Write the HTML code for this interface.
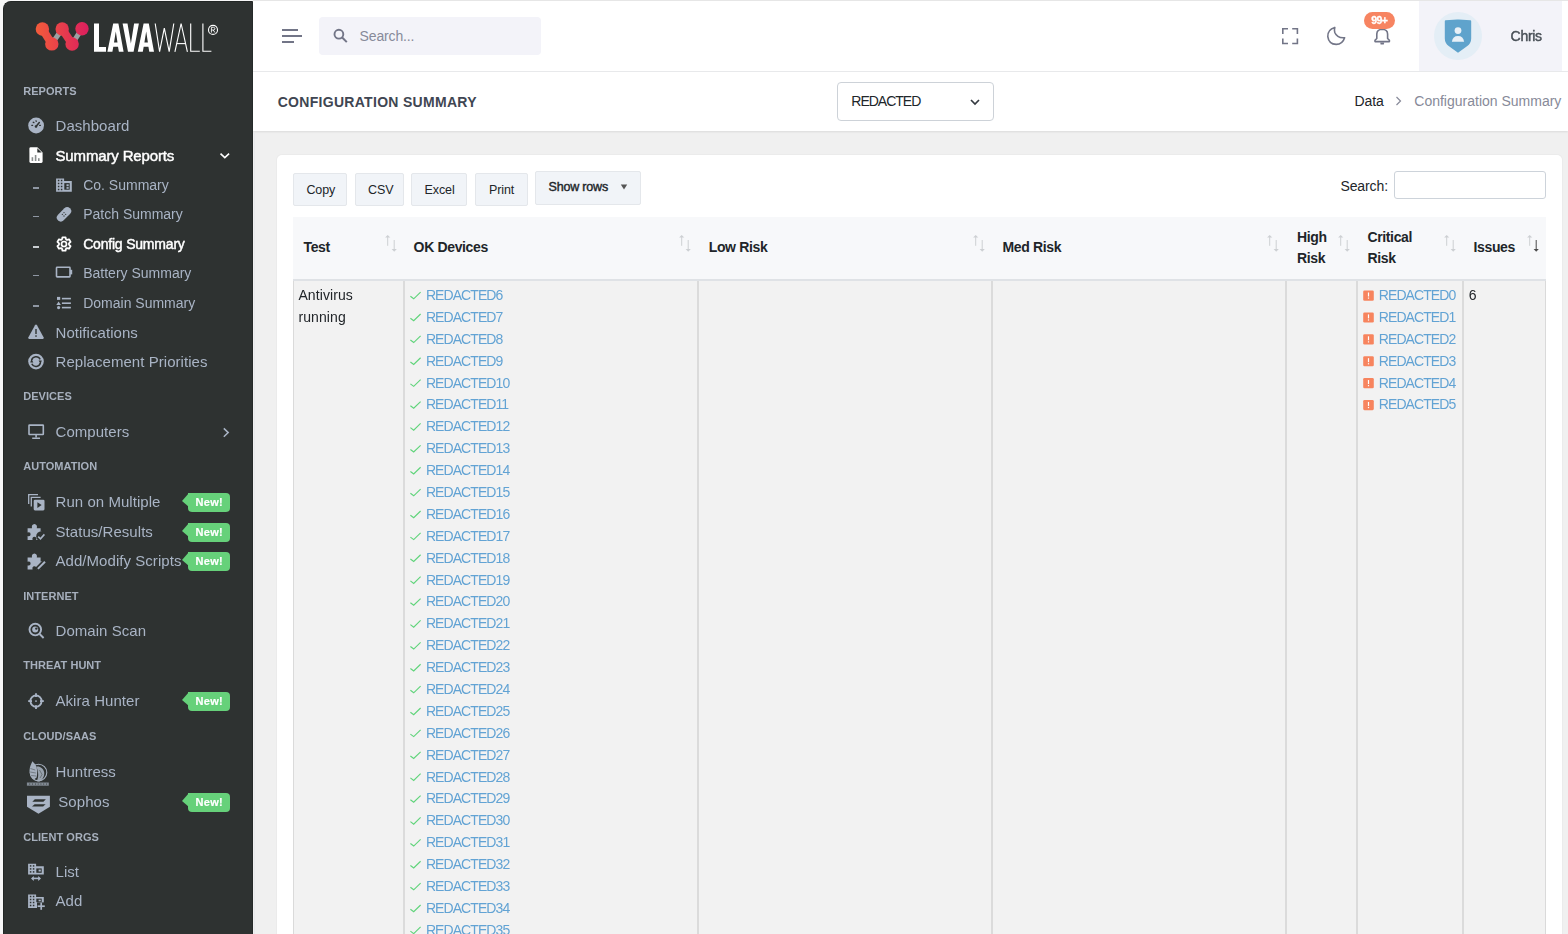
<!DOCTYPE html><html><head><meta charset="utf-8"><style>
*{box-sizing:border-box;margin:0;padding:0}
html,body{width:1568px;height:934px;overflow:hidden;background:#f7f7f7;font-family:"Liberation Sans",sans-serif}
.t{position:absolute;white-space:nowrap}
.abs{position:absolute}
</style></head><body>
<div class="abs" style="left:253px;top:0;width:1315px;height:1px;background:#e6e6e6"></div>
<div class="abs" style="left:253px;top:131px;width:1315px;height:803px;background:#f0f0f0"></div>
<div class="abs" style="left:253px;top:1px;width:1315px;height:70px;background:#fff"></div>
<div class="abs" style="left:253px;top:71px;width:1315px;height:1px;background:#e9eaec"></div>
<div class="abs" style="left:253px;top:72px;width:1315px;height:59px;background:#fff;box-shadow:0 1px 2px rgba(0,0,0,0.09)"></div>
<div class="abs" style="left:0;top:0;width:253px;height:934px;will-change:transform">
<div class="abs" style="left:3px;top:1px;width:250px;height:940px;background:#2e3231;border-top-left-radius:8px;border-left:1px solid #222625;border-top:1px solid #222625;border-right:1px solid #262a29"></div>
<div class="t" style="left:23.20px;top:83.59px;font-size:11px;line-height:15px;color:#a7b0bd;font-weight:700;letter-spacing:0.05px">REPORTS</div>
<div class="t" style="left:23.20px;top:389.49px;font-size:11px;line-height:15px;color:#a7b0bd;font-weight:700;letter-spacing:0.05px">DEVICES</div>
<div class="t" style="left:23.20px;top:459.49px;font-size:11px;line-height:15px;color:#a7b0bd;font-weight:700;letter-spacing:0.05px">AUTOMATION</div>
<div class="t" style="left:23.20px;top:588.69px;font-size:11px;line-height:15px;color:#a7b0bd;font-weight:700;letter-spacing:0.05px">INTERNET</div>
<div class="t" style="left:23.20px;top:658.49px;font-size:11px;line-height:15px;color:#a7b0bd;font-weight:700;letter-spacing:0.05px">THREAT HUNT</div>
<div class="t" style="left:23.20px;top:728.69px;font-size:11px;line-height:15px;color:#a7b0bd;font-weight:700;letter-spacing:0.05px">CLOUD/SAAS</div>
<div class="t" style="left:23.20px;top:829.59px;font-size:11px;line-height:15px;color:#a7b0bd;font-weight:700;letter-spacing:0.05px">CLIENT ORGS</div>
<div class="t" style="left:55.50px;top:115.40px;font-size:15px;line-height:21px;color:#a9b4c5;font-weight:400;letter-spacing:0.05px">Dashboard</div>
<div class="t" style="left:55.50px;top:145.30px;font-size:15px;line-height:21px;color:#ffffff;font-weight:400;letter-spacing:-0.15px;-webkit-text-stroke:0.45px #fff">Summary Reports</div>
<div class="t" style="left:55.50px;top:322.30px;font-size:15px;line-height:21px;color:#a9b4c5;font-weight:400;letter-spacing:0.05px">Notifications</div>
<div class="t" style="left:55.50px;top:351.40px;font-size:15px;line-height:21px;color:#a9b4c5;font-weight:400;letter-spacing:0.05px">Replacement Priorities</div>
<div class="t" style="left:55.50px;top:421.10px;font-size:15px;line-height:21px;color:#a9b4c5;font-weight:400;letter-spacing:0.05px">Computers</div>
<div class="t" style="left:55.50px;top:490.90px;font-size:15px;line-height:21px;color:#a9b4c5;font-weight:400;letter-spacing:0.05px">Run on Multiple</div>
<div class="t" style="left:55.50px;top:520.70px;font-size:15px;line-height:21px;color:#a9b4c5;font-weight:400;letter-spacing:0.05px">Status/Results</div>
<div class="t" style="left:55.50px;top:549.60px;font-size:15px;line-height:21px;color:#a9b4c5;font-weight:400;letter-spacing:0.05px">Add/Modify Scripts</div>
<div class="t" style="left:55.50px;top:620.20px;font-size:15px;line-height:21px;color:#a9b4c5;font-weight:400;letter-spacing:0.05px">Domain Scan</div>
<div class="t" style="left:55.50px;top:690.30px;font-size:15px;line-height:21px;color:#a9b4c5;font-weight:400;letter-spacing:0.05px">Akira Hunter</div>
<div class="t" style="left:55.50px;top:760.90px;font-size:15px;line-height:21px;color:#a9b4c5;font-weight:400;letter-spacing:0.05px">Huntress</div>
<div class="t" style="left:55.50px;top:861.30px;font-size:15px;line-height:21px;color:#a9b4c5;font-weight:400;letter-spacing:0.05px">List</div>
<div class="t" style="left:55.50px;top:890.00px;font-size:15px;line-height:21px;color:#a9b4c5;font-weight:400;letter-spacing:0.05px">Add</div>
<div class="t" style="left:58.30px;top:790.70px;font-size:15px;line-height:21px;color:#a9b4c5;font-weight:400;letter-spacing:0.05px">Sophos</div>
<div class="t" style="left:83.20px;top:175.25px;font-size:14px;line-height:20px;color:#a9b4c5;font-weight:400;letter-spacing:0px">Co. Summary</div>
<div class="abs" style="left:33px;top:187px;width:6px;height:2px;background:#8f97a3"></div>
<div class="t" style="left:83.20px;top:204.15px;font-size:14px;line-height:20px;color:#a9b4c5;font-weight:400;letter-spacing:0px">Patch Summary</div>
<div class="abs" style="left:33px;top:216px;width:6px;height:1px;background:#8f97a3"></div>
<div class="t" style="left:83.20px;top:233.85px;font-size:14px;line-height:20px;color:#ffffff;font-weight:400;letter-spacing:-0.2px;-webkit-text-stroke:0.45px #fff">Config Summary</div>
<div class="abs" style="left:33px;top:246px;width:6px;height:2px;background:#c9cdd1"></div>
<div class="t" style="left:83.20px;top:263.05px;font-size:14px;line-height:20px;color:#a9b4c5;font-weight:400;letter-spacing:0px">Battery Summary</div>
<div class="abs" style="left:33px;top:275px;width:6px;height:1px;background:#8f97a3"></div>
<div class="t" style="left:83.20px;top:292.95px;font-size:14px;line-height:20px;color:#a9b4c5;font-weight:400;letter-spacing:0px">Domain Summary</div>
<div class="abs" style="left:33px;top:305px;width:6px;height:2px;background:#8f97a3"></div>
<div class="abs" style="left:188px;top:492.8px;width:42px;height:19px;background:#66d17a;border-radius:0 4px 4px 4px"></div>
<div class="abs" style="left:181.8px;top:492.8px;width:0;height:0;border-top:8.4px solid transparent;border-bottom:6px solid transparent;border-right:7.2px solid #66d17a"></div>
<div class="t" style="left:195.60px;top:494.89px;font-size:11px;line-height:15px;color:#ffffff;font-weight:700;letter-spacing:0.25px;-webkit-text-stroke:0.2px #fff">New!</div>
<div class="abs" style="left:188px;top:522.8px;width:42px;height:19px;background:#66d17a;border-radius:0 4px 4px 4px"></div>
<div class="abs" style="left:181.8px;top:522.8px;width:0;height:0;border-top:8.4px solid transparent;border-bottom:6px solid transparent;border-right:7.2px solid #66d17a"></div>
<div class="t" style="left:195.60px;top:524.89px;font-size:11px;line-height:15px;color:#ffffff;font-weight:700;letter-spacing:0.25px;-webkit-text-stroke:0.2px #fff">New!</div>
<div class="abs" style="left:188px;top:551.8px;width:42px;height:19px;background:#66d17a;border-radius:0 4px 4px 4px"></div>
<div class="abs" style="left:181.8px;top:551.8px;width:0;height:0;border-top:8.4px solid transparent;border-bottom:6px solid transparent;border-right:7.2px solid #66d17a"></div>
<div class="t" style="left:195.60px;top:553.89px;font-size:11px;line-height:15px;color:#ffffff;font-weight:700;letter-spacing:0.25px;-webkit-text-stroke:0.2px #fff">New!</div>
<div class="abs" style="left:188px;top:692.1px;width:42px;height:19px;background:#66d17a;border-radius:0 4px 4px 4px"></div>
<div class="abs" style="left:181.8px;top:692.1px;width:0;height:0;border-top:8.4px solid transparent;border-bottom:6px solid transparent;border-right:7.2px solid #66d17a"></div>
<div class="t" style="left:195.60px;top:694.19px;font-size:11px;line-height:15px;color:#ffffff;font-weight:700;letter-spacing:0.25px;-webkit-text-stroke:0.2px #fff">New!</div>
<div class="abs" style="left:188px;top:792.8px;width:42px;height:19px;background:#66d17a;border-radius:0 4px 4px 4px"></div>
<div class="abs" style="left:181.8px;top:792.8px;width:0;height:0;border-top:8.4px solid transparent;border-bottom:6px solid transparent;border-right:7.2px solid #66d17a"></div>
<div class="t" style="left:195.60px;top:794.89px;font-size:11px;line-height:15px;color:#ffffff;font-weight:700;letter-spacing:0.25px;-webkit-text-stroke:0.2px #fff">New!</div>
<svg class="abs" style="left:0;top:0" width="253" height="934" viewBox="0 0 253 934"><defs><linearGradient id="lg" gradientUnits="userSpaceOnUse" x1="36" x2="89" y1="0" y2="0"><stop offset="0" stop-color="#f35b3b"/><stop offset="1" stop-color="#db1e5e"/></linearGradient></defs><g><line x1="51.8" y1="43.9" x2="62.2" y2="29" stroke="#9ca1a4" stroke-width="5"/><line x1="72.1" y1="44" x2="82" y2="28.7" stroke="#9ca1a4" stroke-width="5"/><line x1="42.4" y1="29" x2="51.8" y2="43.9" stroke="url(#lg)" stroke-width="8"/><line x1="62.2" y1="29" x2="72.1" y2="44" stroke="url(#lg)" stroke-width="8"/><g fill="url(#lg)"><circle cx="42.4" cy="29" r="6.7"/><circle cx="51.8" cy="43.9" r="6.7"/><circle cx="62.2" cy="29" r="6.7"/><circle cx="72.1" cy="44" r="6.7"/><circle cx="82" cy="28.7" r="6.7"/></g></g><g fill="#ffffff"><path d="M94,23.5 L99,23.5 L99,47.1 L106,47.1 L106,51.8 L94,51.8 Z"/><path fill-rule="evenodd" d="M107.4,51.8 L113.2,23.5 L118.4,23.5 L123.6,51.8 L118.9,51.8 L118,46.8 L113.3,46.8 L112.4,51.8 Z M114,42.6 L117.5,42.6 L115.8,31.5 Z"/><path fill-rule="evenodd" d="M137.8,51.8 L143.6,23.5 L148.8,23.5 L154.0,51.8 L149.3,51.8 L148.4,46.8 L143.7,46.8 L142.8,51.8 Z M144.4,42.6 L147.9,42.6 L146.2,31.5 Z"/><path d="M122.6,23.5 L127.5,23.5 L130.9,43.5 L134.1,23.5 L138.9,23.5 L133.6,51.8 L128,51.8 Z"/></g><g fill="none" stroke="#ffffff" stroke-width="1.12"><polyline points="155.2,23.5 159.6,51.6 164.3,28.2 169.2,51.6 173.8,23.5"/><polyline points="174.9,51.8 181.1,23.5 187.4,51.8"/><line x1="176.8" y1="43.6" x2="185.5" y2="43.6"/><polyline points="190.7,23.5 190.7,51.2 199.8,51.2"/><polyline points="202.9,23.5 202.9,51.2 211.4,51.2"/><circle cx="213" cy="29.9" r="4.5" stroke-width="1.1"/><path d="M211.4,32.6 L211.4,27.3 L213.4,27.3 Q214.9,27.4 214.9,28.7 Q214.9,30 213.4,30 L211.4,30 M213.2,30 L215,32.6" stroke-width="0.9"/></g><circle cx="36.1" cy="125.5" r="7.9" fill="#a9b4c5"/><g stroke="#2e3231" stroke-width="1.3" stroke-linecap="round"><line x1="36" y1="126.5" x2="39.3" y2="122.5" stroke-width="1.5"/><circle cx="36" cy="126.5" r="1.3" fill="#2e3231" stroke="none"/><line x1="31.8" y1="125.3" x2="32.6" y2="125.3"/><line x1="33.2" y1="122.2" x2="33.9" y2="122.6"/><line x1="36" y1="120.8" x2="36.2" y2="121.4"/><line x1="39.6" y1="125.3" x2="40.4" y2="125.3"/></g><path d="M29.4,148.6 Q29.4,147.3 30.7,147.3 L37.3,147.3 L42.6,152.6 L42.6,161.6 Q42.6,162.9 41.3,162.9 L30.7,162.9 Q29.4,162.9 29.4,161.6 Z" fill="#ffffff"/><path d="M37.3,148.2 L41.7,152.6 L37.3,152.6 Z" fill="#2e3231"/><g fill="#8c9090"><rect x="31.6" y="157.2" width="1.6" height="3.8"/><rect x="34.8" y="155" width="1.6" height="6"/><rect x="38" y="158.2" width="1.6" height="2.8"/></g><path d="M56.1,178.4 L64.1,178.4 L64.1,180.9 L71.8,180.9 L71.8,191.8 L56.1,191.8 Z" fill="#a9b4c5"/><g fill="#2e3231"><rect x="57.85" y="179.75" width="1.5" height="1.5"/><rect x="57.85" y="182.75" width="1.5" height="1.5"/><rect x="57.85" y="185.75" width="1.5" height="1.5"/><rect x="57.85" y="188.75" width="1.5" height="1.5"/><rect x="60.85" y="179.75" width="1.5" height="1.5"/><rect x="60.85" y="182.75" width="1.5" height="1.5"/><rect x="60.85" y="185.75" width="1.5" height="1.5"/><rect x="60.85" y="188.75" width="1.5" height="1.5"/></g><rect x="64.3" y="183.1" width="5.4" height="6.6" fill="#2e3231"/><g fill="#a9b4c5"><rect x="66.5" y="184.3" width="2.2" height="1.9"/><rect x="66.5" y="187.1" width="2.2" height="1.7"/></g><g transform="rotate(-45 64 214.3)"><rect x="55.5" y="210.3" width="17" height="8" rx="4" fill="#a9b4c5"/><g fill="#2e3231"><circle cx="62.8" cy="213.1" r="0.6"/><circle cx="65.2" cy="213.1" r="0.6"/><circle cx="62.8" cy="215.5" r="0.6"/><circle cx="65.2" cy="215.5" r="0.6"/></g></g><path d="M61.97,239.43 L62.45,237.28 L65.55,237.28 L66.03,239.43 L66.94,239.95 L69.05,239.29 L70.60,241.98 L68.97,243.48 L68.97,244.52 L70.60,246.02 L69.05,248.71 L66.94,248.05 L66.03,248.57 L65.55,250.72 L62.45,250.72 L61.97,248.57 L61.06,248.05 L58.95,248.71 L57.40,246.02 L59.03,244.52 L59.03,243.48 L57.40,241.98 L58.95,239.29 L61.06,239.95 Z" fill="#3a3d3d" stroke="#ffffff" stroke-width="1.75" stroke-linejoin="round"/><circle cx="64" cy="244" r="2.5" fill="#2e3231" stroke="#ffffff" stroke-width="1.7"/><rect x="56.5" y="267.3" width="13.5" height="9.6" fill="none" stroke="#a9b4c5" stroke-width="1.6" rx="0.6"/><rect x="70" y="269.8" width="2.2" height="4.6" fill="#a9b4c5"/><g fill="#a9b4c5"><rect x="57" y="296.9" width="3.2" height="3"/><path d="M58.6,301.6 L60.9,305 L56.3,305 Z"/><circle cx="58.6" cy="307.6" r="1.6"/><rect x="61.9" y="297.8" width="9" height="1.6"/><rect x="61.9" y="302.4" width="9" height="1.6"/><rect x="61.9" y="306.8" width="9" height="1.6"/></g><path d="M36,324.5 Q36.6,324.5 37,325.2 L43.7,337.5 Q44,338.9 42.8,338.9 L29.2,338.9 Q28,338.9 28.3,337.5 L35,325.2 Q35.4,324.5 36,324.5 Z" fill="#a9b4c5"/><g fill="#2e3231"><rect x="35.3" y="329" width="1.4" height="5"/><rect x="35.3" y="335.3" width="1.4" height="1.5"/></g><circle cx="36" cy="361.6" r="7.8" fill="#a9b4c5"/><g fill="none" stroke="#2e3231" stroke-width="1.5"><path d="M31.6,360.2 A4.6,4.6 0 0 1 40.2,359.4"/><path d="M40.4,363 A4.6,4.6 0 0 1 31.8,363.8"/></g><g fill="#2e3231"><path d="M38.6,360.6 L41.8,360.6 L40.6,364 Z"/><path d="M33.4,362.6 L30.2,362.6 L31.4,359.2 Z"/></g><rect x="29" y="425.1" width="14.3" height="9.4" fill="none" stroke="#a9b4c5" stroke-width="1.6" rx="0.5"/><rect x="35.3" y="434.5" width="1.6" height="3" fill="#a9b4c5"/><rect x="32.2" y="437.5" width="7.8" height="1.5" fill="#a9b4c5"/><g fill="none" stroke="#a9b4c5" stroke-width="1.3"><path d="M28.7,504 L28.7,494.7 L38,494.7"/><path d="M31.3,506.6 L31.3,497.3 L40.6,497.3"/></g><rect x="33.7" y="499.8" width="10.8" height="10.6" rx="1.3" fill="#a9b4c5"/><path d="M37.4,502.3 L41.6,505.1 L37.4,507.9 Z" fill="#2e3231"/><path fill="#a9b4c5" d="M27.6,528.2 L32.0,528.2 Q31.200000000000003,524.4 34.4,524 Q37.6,524.4 36.8,528.2 L40.6,528.2 L40.6,532 Q43.6,531.3 43.6,534.2 Q43.6,537.1 40.6,536.4 L40.6,540 L36.2,540 Q37.0,537 34.4,536.8 Q31.8,537 32.6,540 L27.6,540 L27.6,536 Q30.6,536.8 30.6,534.2 Q30.6,531.5 27.6,532.4 Z"/><circle cx="41.2" cy="536.4" r="5" fill="#2e3231"/><path d="M38.2,536.6 L40.5,538.8 L44.4,534.4" fill="none" stroke="#a9b4c5" stroke-width="1.6"/><path fill="#a9b4c5" d="M27.6,557.6 L32.0,557.6 Q31.200000000000003,553.8 34.4,553.4 Q37.6,553.8 36.8,557.6 L40.6,557.6 L40.6,561.4 Q43.6,560.6999999999999 43.6,563.6 Q43.6,566.5 40.6,565.8 L40.6,569.4 L36.2,569.4 Q37.0,566.4 34.4,566.1999999999999 Q31.8,566.4 32.6,569.4 L27.6,569.4 L27.6,565.4 Q30.6,566.1999999999999 30.6,563.6 Q30.6,560.9 27.6,561.8 Z"/><path d="M36.6,570 L46,560.6" stroke="#2e3231" stroke-width="5"/><path d="M37.9,568.9 L45,561.8" stroke="#a9b4c5" stroke-width="2"/><circle cx="35.3" cy="629.6" r="5.8" fill="none" stroke="#a9b4c5" stroke-width="1.9"/><line x1="39.6" y1="634" x2="43.6" y2="638" stroke="#a9b4c5" stroke-width="1.8"/><circle cx="35.2" cy="629.6" r="3" fill="#a9b4c5"/><circle cx="36.3" cy="628.6" r="1.2" fill="#2e3231"/><circle cx="36" cy="701.1" r="5.6" fill="none" stroke="#a9b4c5" stroke-width="1.85"/><g stroke="#a9b4c5" stroke-width="1.85"><line x1="36" y1="693.2" x2="36" y2="697"/><line x1="36" y1="705.2" x2="36" y2="709"/><line x1="28.2" y1="701.1" x2="32" y2="701.1"/><line x1="40" y1="701.1" x2="43.8" y2="701.1"/></g><circle cx="36" cy="701.1" r="0.9" fill="#a9b4c5"/><circle cx="38.5" cy="772.6" r="8.3" fill="none" stroke="#a5afbd" stroke-width="1.1"/><path d="M32.4,761.2 C31,764 29.6,767 29.5,770.5 C29.5,774.5 31.2,777.6 34,779.6 L36.6,777.6 C37.6,773 37.6,768.5 35.4,764.6 Z" fill="#a5afbd"/><path d="M36.2,766.6 C40.2,766 43.6,768.6 44.2,772.4 C44.6,776.4 42.2,780.2 39.4,781.6 L36.8,781.2 C38.8,777.2 38.8,772.2 36.2,766.6 Z" fill="#a5afbd" opacity="0.9"/><g stroke="#2e3231" stroke-width="0.6" opacity="0.7" fill="none"><path d="M30.4,768.5 L35.2,770"/><path d="M30.2,772 L35.8,773"/><path d="M31.2,775.5 L36,776"/><path d="M39.5,770 L42,774.5 L40,778"/></g><rect x="26.9" y="782.5" width="21.9" height="3.2" fill="#a5afbd" opacity="0.7"/><g fill="#2e3231" opacity="0.65"><rect x="29.4" y="783.2" width="0.7" height="1.8"/><rect x="32.2" y="783.2" width="0.7" height="1.8"/><rect x="35" y="783.2" width="0.7" height="1.8"/><rect x="37.8" y="783.2" width="0.7" height="1.8"/><rect x="40.6" y="783.2" width="0.7" height="1.8"/><rect x="43.4" y="783.2" width="0.7" height="1.8"/><rect x="46.2" y="783.2" width="0.7" height="1.8"/></g><path d="M27,795.7 L49.9,795.7 L49.9,806.8 L38.5,813.7 L27,806.8 Z" fill="#a9b4c5"/><g fill="#2e3231"><path d="M34.8,799.3 L45.9,799.3 L43.4,801.7 L32.3,801.7 Z"/><path d="M34.6,804.2 L45.6,804.2 L43.1,806.6 L32,806.6 Z"/></g><path d="M28.1,863.8 L36.1,863.8 L36.1,866.3 L43.8,866.3 L43.8,874.5 L28.1,874.5 Z" fill="#a9b4c5"/><g fill="#2e3231"><rect x="29.85" y="865.15" width="1.5" height="1.5"/><rect x="29.85" y="868.15" width="1.5" height="1.5"/><rect x="29.85" y="871.15" width="1.5" height="1.5"/><rect x="32.85" y="865.15" width="1.5" height="1.5"/><rect x="32.85" y="868.15" width="1.5" height="1.5"/><rect x="32.85" y="871.15" width="1.5" height="1.5"/></g><rect x="36.3" y="868.4" width="5.4" height="4.4" fill="#2e3231"/><rect x="38.6" y="869.6" width="2.2" height="1.9" fill="#a9b4c5"/><g stroke="#a9b4c5" stroke-width="1.6" fill="none"><line x1="32.4" y1="878.4" x2="39.6" y2="878.4"/></g><g fill="#a9b4c5"><path d="M31,878.4 L33.8,875.9 L33.8,880.9 Z"/><path d="M41,878.4 L38.2,875.9 L38.2,880.9 Z"/></g><path d="M28.1,894.4 L36.1,894.4 L36.1,896.9 L43.8,896.9 L43.8,908 L28.1,908 Z" fill="#a9b4c5"/><g fill="#2e3231"><rect x="29.85" y="895.75" width="1.5" height="1.5"/><rect x="29.85" y="898.75" width="1.5" height="1.5"/><rect x="29.85" y="901.75" width="1.5" height="1.5"/><rect x="29.85" y="904.75" width="1.5" height="1.5"/><rect x="32.85" y="895.75" width="1.5" height="1.5"/><rect x="32.85" y="898.75" width="1.5" height="1.5"/><rect x="32.85" y="901.75" width="1.5" height="1.5"/><rect x="32.85" y="904.75" width="1.5" height="1.5"/></g><rect x="36.3" y="898.6" width="5.4" height="3.6" fill="#2e3231"/><rect x="38.6" y="899.7" width="2.2" height="1.6" fill="#a9b4c5"/><path d="M37,902.4 L45.8,902.4 L45.8,911.2 L37,911.2 Z" fill="#2e3231"/><g stroke="#a9b4c5" stroke-width="1.7"><line x1="41.2" y1="902.6" x2="41.2" y2="909.8"/><line x1="37.6" y1="906.2" x2="44.8" y2="906.2"/></g><polyline points="220.5,153.6 224.8,157.6 229.1,153.6" fill="none" stroke="#ffffff" stroke-width="1.6"/><polyline points="223.8,428.4 228.2,432.6 223.8,436.8" fill="none" stroke="#a9b4c5" stroke-width="1.5"/></svg>
</div>
<div class="abs" style="left:282px;top:29px;width:16px;height:2px;background:#727587"></div>
<div class="abs" style="left:282px;top:35px;width:20px;height:2px;background:#727587"></div>
<div class="abs" style="left:282px;top:41px;width:12px;height:2px;background:#727587"></div>
<div class="abs" style="left:319px;top:17px;width:222px;height:38px;background:#f3f3f9;border-radius:4px"></div>
<div class="t" style="left:359.60px;top:26.05px;font-size:14px;line-height:20px;color:#878a99;font-weight:400;letter-spacing:-0.15px">Search...</div>
<svg class="abs" style="left:0;top:0" width="1568" height="72" viewBox="0 0 1568 72"><circle cx="338.9" cy="34.2" r="4.4" fill="none" stroke="#727587" stroke-width="1.9"/><line x1="342.2" y1="37.5" x2="346.8" y2="42.1" stroke="#727587" stroke-width="2"/><g fill="none" stroke="#727587" stroke-width="1.6"><polyline points="1282.8,34 1282.8,28.8 1288,28.8"/><polyline points="1292.2,28.8 1297.4,28.8 1297.4,34"/><polyline points="1297.4,38.4 1297.4,43.5 1292.2,43.5"/><polyline points="1288,43.5 1282.8,43.5 1282.8,38.4"/></g><path d="M1334.8,27.4 Q1327.4,29.6 1327.8,36.6 Q1328.8,44.2 1336.2,44.4 Q1342.6,44.2 1344.6,37.7 Q1337.2,38.4 1334.8,32.5 Q1334,30 1334.8,27.4 Z" fill="none" stroke="#727587" stroke-width="1.6" stroke-linejoin="round"/><path d="M1375,41.6 L1375,40.3 L1376.8,38.5 L1376.8,34 Q1377,29.4 1382.2,29.3 Q1387.4,29.4 1387.6,34 L1387.6,38.5 L1389.4,40.3 L1389.4,41.6 Z" fill="none" stroke="#727587" stroke-width="1.6" stroke-linejoin="round"/><path d="M1380.2,42.4 L1384.2,42.4 L1383.8,44.6 L1380.6,44.6 Z" fill="#727587"/></svg>
<div class="abs" style="left:1364.3px;top:11.7px;width:31px;height:17px;background:#f78461;border-radius:9px"></div>
<div class="t" style="left:1371.20px;top:12.86px;font-size:10.5px;line-height:15px;color:#ffffff;font-weight:700;letter-spacing:-0.5px;-webkit-text-stroke:0.3px #fff">99+</div>
<div class="abs" style="left:1419px;top:1px;width:143px;height:70px;background:#f3f3f9"></div>
<div class="abs" style="left:1434px;top:12px;width:48px;height:48px;background:#e4eef6;border-radius:50%"></div>
<svg class="abs" style="left:1440px;top:15px" width="36" height="40" viewBox="0 0 36 40"><path d="M4.8,6.2 Q4.8,5.4 5.6,5.2 L17.2,4.5 Q18,4.4 18.8,4.5 L30.4,5.2 Q31.2,5.4 31.2,6.2 L31.2,23.5 Q31.2,28.2 27,31.3 L18,37.7 L9,31.3 Q4.8,28.2 4.8,23.5 Z" fill="#5fa3cc"/><circle cx="18" cy="15.6" r="3.4" fill="#e8f0f7"/><path d="M11.9,26.8 Q12.6,21 18,21 Q23.4,21 24.1,26.8 Z" fill="#e8f0f7"/></svg>
<div class="t" style="left:1510.60px;top:26.15px;font-size:14px;line-height:20px;color:#495057;font-weight:400;letter-spacing:-0.3px;-webkit-text-stroke:0.45px #495057">Chris</div>
<div class="t" style="left:277.70px;top:91.85px;font-size:14px;line-height:20px;color:#3f4652;font-weight:700;letter-spacing:0.3px">CONFIGURATION SUMMARY</div>
<div class="abs" style="left:837px;top:82px;width:157px;height:39px;background:#fff;border:1px solid #cdd2d8;border-radius:4px"></div>
<div class="t" style="left:851.30px;top:91.05px;font-size:14px;line-height:20px;color:#212529;font-weight:400;letter-spacing:-1px">REDACTED</div>
<svg class="abs" style="left:968px;top:97px" width="14" height="10" viewBox="0 0 14 10"><polyline points="3,3 7,7 11,3" fill="none" stroke="#343a40" stroke-width="1.7"/></svg>
<div class="t" style="left:1354.50px;top:90.65px;font-size:14px;line-height:20px;color:#212529;font-weight:400;letter-spacing:-0.1px">Data</div>
<svg class="abs" style="left:1392px;top:94px" width="12" height="14" viewBox="0 0 12 14"><polyline points="4.5,3 8.5,7 4.5,11" fill="none" stroke="#878a99" stroke-width="1.2"/></svg>
<div class="t" style="left:1414.30px;top:90.65px;font-size:14px;line-height:20px;color:#878a99;font-weight:400;letter-spacing:0px">Configuration Summary</div>
<div class="abs" style="left:254px;top:132px;width:1px;height:802px;background:#e8e9ec"></div>
<div class="abs" style="left:277px;top:155px;width:1285px;height:800px;background:#fff;border-radius:5px;box-shadow:0 0 0 1px #ebebeb"></div>
<div class="abs" style="left:293px;top:173px;width:54px;height:33px;background:#f1f4f8;border:1px solid #e4e7eb;border-radius:2px"></div>
<div class="t" style="left:306.40px;top:180.67px;font-size:12.5px;line-height:18px;color:#212529;font-weight:400;letter-spacing:-0.1px">Copy</div>
<div class="abs" style="left:355px;top:173px;width:49px;height:33px;background:#f1f4f8;border:1px solid #e4e7eb;border-radius:2px"></div>
<div class="t" style="left:368.00px;top:180.67px;font-size:12.5px;line-height:18px;color:#212529;font-weight:400;letter-spacing:-0.1px">CSV</div>
<div class="abs" style="left:411px;top:173px;width:56px;height:33px;background:#f1f4f8;border:1px solid #e4e7eb;border-radius:2px"></div>
<div class="t" style="left:424.50px;top:180.67px;font-size:12.5px;line-height:18px;color:#212529;font-weight:400;letter-spacing:-0.1px">Excel</div>
<div class="abs" style="left:475px;top:173px;width:53px;height:33px;background:#f1f4f8;border:1px solid #e4e7eb;border-radius:2px"></div>
<div class="t" style="left:489.00px;top:180.67px;font-size:12.5px;line-height:18px;color:#212529;font-weight:400;letter-spacing:-0.1px">Print</div>
<div class="abs" style="left:535px;top:171px;width:106px;height:34px;background:#f1f4f8;border:1px solid #e4e7eb;border-radius:2px"></div>
<div class="t" style="left:548.60px;top:178.47px;font-size:12.5px;line-height:18px;color:#212529;font-weight:400;letter-spacing:-0.2px;-webkit-text-stroke:0.4px #212529">Show rows</div>
<svg class="abs" style="left:619px;top:182px" width="10" height="10" viewBox="0 0 10 10"><path d="M1.8,2.5 L8.2,2.5 L5,7.6 Z" fill="#555"/></svg>
<div class="t" style="left:1340.40px;top:175.65px;font-size:14px;line-height:20px;color:#212529;font-weight:400;letter-spacing:-0.1px">Search:</div>
<div class="abs" style="left:1394px;top:171px;width:152px;height:28px;background:#fff;border:1px solid #cdd3da;border-radius:3px"></div>
<div class="abs" style="left:293px;top:217px;width:1253px;height:62px;background:#f7f8fa"></div>
<div class="abs" style="left:293px;top:279px;width:1253px;height:2px;background:#dfe2e6"></div>
<div class="abs" style="left:293px;top:281px;width:1253px;height:660px;background:#f2f2f2"></div>
<div class="abs" style="left:293px;top:281px;width:1px;height:660px;background:#dadada"></div>
<div class="abs" style="left:403px;top:281px;width:2px;height:660px;background:#dbdbdb"></div>
<div class="abs" style="left:697px;top:281px;width:2px;height:660px;background:#dbdbdb"></div>
<div class="abs" style="left:991px;top:281px;width:2px;height:660px;background:#dbdbdb"></div>
<div class="abs" style="left:1285px;top:281px;width:2px;height:660px;background:#dbdbdb"></div>
<div class="abs" style="left:1356px;top:281px;width:2px;height:660px;background:#dbdbdb"></div>
<div class="abs" style="left:1462px;top:281px;width:2px;height:660px;background:#dbdbdb"></div>
<div class="abs" style="left:1545px;top:281px;width:1px;height:660px;background:#dadada"></div>
<div class="t" style="left:303.50px;top:236.65px;font-size:14px;line-height:20px;color:#212529;font-weight:700;letter-spacing:-0.35px">Test</div>
<div class="t" style="left:413.60px;top:236.65px;font-size:14px;line-height:20px;color:#212529;font-weight:700;letter-spacing:-0.35px">OK Devices</div>
<div class="t" style="left:708.70px;top:236.65px;font-size:14px;line-height:20px;color:#212529;font-weight:700;letter-spacing:-0.35px">Low Risk</div>
<div class="t" style="left:1002.50px;top:236.65px;font-size:14px;line-height:20px;color:#212529;font-weight:700;letter-spacing:-0.35px">Med Risk</div>
<div class="t" style="left:1473.50px;top:236.65px;font-size:14px;line-height:20px;color:#212529;font-weight:700;letter-spacing:-0.35px">Issues</div>
<div class="t" style="left:1297.00px;top:226.95px;font-size:14px;line-height:20px;color:#212529;font-weight:700;letter-spacing:-0.35px">High</div>
<div class="t" style="left:1297.00px;top:247.75px;font-size:14px;line-height:20px;color:#212529;font-weight:700;letter-spacing:-0.35px">Risk</div>
<div class="t" style="left:1367.40px;top:226.95px;font-size:14px;line-height:20px;color:#212529;font-weight:700;letter-spacing:-0.35px">Critical</div>
<div class="t" style="left:1367.40px;top:247.75px;font-size:14px;line-height:20px;color:#212529;font-weight:700;letter-spacing:-0.35px">Risk</div>
<svg class="abs" style="left:0;top:0" width="1568" height="934" viewBox="0 0 1568 934"><line x1="387.7" y1="237" x2="387.7" y2="245.8" stroke="#cdd0d3" stroke-width="1"/><path d="M385.09999999999997,237.6 L387.7,234.9 L390.3,237.6 Z" fill="#cdd0d3"/><line x1="394.2" y1="240" x2="394.2" y2="249.6" stroke="#cdd0d3" stroke-width="1"/><path d="M391.59999999999997,249 L394.2,251.8 L396.8,249 Z" fill="#cdd0d3"/><line x1="681.7" y1="237" x2="681.7" y2="245.8" stroke="#cdd0d3" stroke-width="1"/><path d="M679.1,237.6 L681.7,234.9 L684.3000000000001,237.6 Z" fill="#cdd0d3"/><line x1="688.2" y1="240" x2="688.2" y2="249.6" stroke="#cdd0d3" stroke-width="1"/><path d="M685.6,249 L688.2,251.8 L690.8000000000001,249 Z" fill="#cdd0d3"/><line x1="975.7" y1="237" x2="975.7" y2="245.8" stroke="#cdd0d3" stroke-width="1"/><path d="M973.1,237.6 L975.7,234.9 L978.3000000000001,237.6 Z" fill="#cdd0d3"/><line x1="982.2" y1="240" x2="982.2" y2="249.6" stroke="#cdd0d3" stroke-width="1"/><path d="M979.6,249 L982.2,251.8 L984.8000000000001,249 Z" fill="#cdd0d3"/><line x1="1269.7" y1="237" x2="1269.7" y2="245.8" stroke="#cdd0d3" stroke-width="1"/><path d="M1267.1000000000001,237.6 L1269.7,234.9 L1272.3,237.6 Z" fill="#cdd0d3"/><line x1="1276.2" y1="240" x2="1276.2" y2="249.6" stroke="#cdd0d3" stroke-width="1"/><path d="M1273.6000000000001,249 L1276.2,251.8 L1278.8,249 Z" fill="#cdd0d3"/><line x1="1340.7" y1="237" x2="1340.7" y2="245.8" stroke="#cdd0d3" stroke-width="1"/><path d="M1338.1000000000001,237.6 L1340.7,234.9 L1343.3,237.6 Z" fill="#cdd0d3"/><line x1="1347.2" y1="240" x2="1347.2" y2="249.6" stroke="#cdd0d3" stroke-width="1"/><path d="M1344.6000000000001,249 L1347.2,251.8 L1349.8,249 Z" fill="#cdd0d3"/><line x1="1446.7" y1="237" x2="1446.7" y2="245.8" stroke="#cdd0d3" stroke-width="1"/><path d="M1444.1000000000001,237.6 L1446.7,234.9 L1449.3,237.6 Z" fill="#cdd0d3"/><line x1="1453.2" y1="240" x2="1453.2" y2="249.6" stroke="#cdd0d3" stroke-width="1"/><path d="M1450.6000000000001,249 L1453.2,251.8 L1455.8,249 Z" fill="#cdd0d3"/><line x1="1529.7" y1="237" x2="1529.7" y2="245.8" stroke="#cdd0d3" stroke-width="1"/><path d="M1527.1000000000001,237.6 L1529.7,234.9 L1532.3,237.6 Z" fill="#cdd0d3"/><line x1="1536.2" y1="240" x2="1536.2" y2="249.6" stroke="#4a4a4a" stroke-width="1"/><path d="M1533.6000000000001,249 L1536.2,251.8 L1538.8,249 Z" fill="#4a4a4a"/><polyline points="410.4,296.3 413.7,298.8 420.6,292.1" fill="none" stroke="#5fd47a" stroke-width="1.15"/><polyline points="410.4,318.19 413.7,320.69 420.6,313.99" fill="none" stroke="#5fd47a" stroke-width="1.15"/><polyline points="410.4,340.08000000000004 413.7,342.58000000000004 420.6,335.88000000000005" fill="none" stroke="#5fd47a" stroke-width="1.15"/><polyline points="410.4,361.97 413.7,364.47 420.6,357.77000000000004" fill="none" stroke="#5fd47a" stroke-width="1.15"/><polyline points="410.4,383.86 413.7,386.36 420.6,379.66" fill="none" stroke="#5fd47a" stroke-width="1.15"/><polyline points="410.4,405.75 413.7,408.25 420.6,401.55" fill="none" stroke="#5fd47a" stroke-width="1.15"/><polyline points="410.4,427.64 413.7,430.14 420.6,423.44" fill="none" stroke="#5fd47a" stroke-width="1.15"/><polyline points="410.4,449.53000000000003 413.7,452.03000000000003 420.6,445.33000000000004" fill="none" stroke="#5fd47a" stroke-width="1.15"/><polyline points="410.4,471.42 413.7,473.92 420.6,467.22" fill="none" stroke="#5fd47a" stroke-width="1.15"/><polyline points="410.4,493.31 413.7,495.81 420.6,489.11" fill="none" stroke="#5fd47a" stroke-width="1.15"/><polyline points="410.4,515.2 413.7,517.7 420.6,511.00000000000006" fill="none" stroke="#5fd47a" stroke-width="1.15"/><polyline points="410.4,537.09 413.7,539.59 420.6,532.89" fill="none" stroke="#5fd47a" stroke-width="1.15"/><polyline points="410.4,558.98 413.7,561.48 420.6,554.78" fill="none" stroke="#5fd47a" stroke-width="1.15"/><polyline points="410.4,580.87 413.7,583.37 420.6,576.67" fill="none" stroke="#5fd47a" stroke-width="1.15"/><polyline points="410.4,602.76 413.7,605.26 420.6,598.56" fill="none" stroke="#5fd47a" stroke-width="1.15"/><polyline points="410.4,624.6500000000001 413.7,627.1500000000001 420.6,620.45" fill="none" stroke="#5fd47a" stroke-width="1.15"/><polyline points="410.4,646.54 413.7,649.04 420.6,642.3399999999999" fill="none" stroke="#5fd47a" stroke-width="1.15"/><polyline points="410.4,668.4300000000001 413.7,670.9300000000001 420.6,664.23" fill="none" stroke="#5fd47a" stroke-width="1.15"/><polyline points="410.4,690.3199999999999 413.7,692.8199999999999 420.6,686.1199999999999" fill="none" stroke="#5fd47a" stroke-width="1.15"/><polyline points="410.4,712.21 413.7,714.71 420.6,708.01" fill="none" stroke="#5fd47a" stroke-width="1.15"/><polyline points="410.4,734.1 413.7,736.6 420.6,729.9" fill="none" stroke="#5fd47a" stroke-width="1.15"/><polyline points="410.4,755.99 413.7,758.49 420.6,751.79" fill="none" stroke="#5fd47a" stroke-width="1.15"/><polyline points="410.4,777.8800000000001 413.7,780.3800000000001 420.6,773.6800000000001" fill="none" stroke="#5fd47a" stroke-width="1.15"/><polyline points="410.4,799.77 413.7,802.27 420.6,795.5699999999999" fill="none" stroke="#5fd47a" stroke-width="1.15"/><polyline points="410.4,821.6600000000001 413.7,824.1600000000001 420.6,817.46" fill="none" stroke="#5fd47a" stroke-width="1.15"/><polyline points="410.4,843.55 413.7,846.05 420.6,839.3499999999999" fill="none" stroke="#5fd47a" stroke-width="1.15"/><polyline points="410.4,865.44 413.7,867.94 420.6,861.24" fill="none" stroke="#5fd47a" stroke-width="1.15"/><polyline points="410.4,887.3299999999999 413.7,889.8299999999999 420.6,883.1299999999999" fill="none" stroke="#5fd47a" stroke-width="1.15"/><polyline points="410.4,909.22 413.7,911.72 420.6,905.02" fill="none" stroke="#5fd47a" stroke-width="1.15"/><polyline points="410.4,931.1100000000001 413.7,933.6100000000001 420.6,926.9100000000001" fill="none" stroke="#5fd47a" stroke-width="1.15"/><rect x="1363.2" y="290.50" width="10.6" height="10.2" rx="1.3" fill="#f7845e"/><rect x="1367.9" y="292.50" width="1.2" height="4" fill="#fff"/><rect x="1367.9" y="297.50" width="1.2" height="1.2" fill="#fff"/><rect x="1363.2" y="312.39" width="10.6" height="10.2" rx="1.3" fill="#f7845e"/><rect x="1367.9" y="314.39" width="1.2" height="4" fill="#fff"/><rect x="1367.9" y="319.39" width="1.2" height="1.2" fill="#fff"/><rect x="1363.2" y="334.28" width="10.6" height="10.2" rx="1.3" fill="#f7845e"/><rect x="1367.9" y="336.28" width="1.2" height="4" fill="#fff"/><rect x="1367.9" y="341.28" width="1.2" height="1.2" fill="#fff"/><rect x="1363.2" y="356.17" width="10.6" height="10.2" rx="1.3" fill="#f7845e"/><rect x="1367.9" y="358.17" width="1.2" height="4" fill="#fff"/><rect x="1367.9" y="363.17" width="1.2" height="1.2" fill="#fff"/><rect x="1363.2" y="378.06" width="10.6" height="10.2" rx="1.3" fill="#f7845e"/><rect x="1367.9" y="380.06" width="1.2" height="4" fill="#fff"/><rect x="1367.9" y="385.06" width="1.2" height="1.2" fill="#fff"/><rect x="1363.2" y="399.95" width="10.6" height="10.2" rx="1.3" fill="#f7845e"/><rect x="1367.9" y="401.95" width="1.2" height="4" fill="#fff"/><rect x="1367.9" y="406.95" width="1.2" height="1.2" fill="#fff"/></svg>
<div class="t" style="left:425.90px;top:284.95px;font-size:14px;line-height:20px;color:#62a3d4;font-weight:400;letter-spacing:-0.92px">REDACTED6</div>
<div class="t" style="left:425.90px;top:306.84px;font-size:14px;line-height:20px;color:#62a3d4;font-weight:400;letter-spacing:-0.92px">REDACTED7</div>
<div class="t" style="left:425.90px;top:328.73px;font-size:14px;line-height:20px;color:#62a3d4;font-weight:400;letter-spacing:-0.92px">REDACTED8</div>
<div class="t" style="left:425.90px;top:350.62px;font-size:14px;line-height:20px;color:#62a3d4;font-weight:400;letter-spacing:-0.92px">REDACTED9</div>
<div class="t" style="left:425.90px;top:372.51px;font-size:14px;line-height:20px;color:#62a3d4;font-weight:400;letter-spacing:-0.92px">REDACTED10</div>
<div class="t" style="left:425.90px;top:394.40px;font-size:14px;line-height:20px;color:#62a3d4;font-weight:400;letter-spacing:-0.92px">REDACTED11</div>
<div class="t" style="left:425.90px;top:416.29px;font-size:14px;line-height:20px;color:#62a3d4;font-weight:400;letter-spacing:-0.92px">REDACTED12</div>
<div class="t" style="left:425.90px;top:438.18px;font-size:14px;line-height:20px;color:#62a3d4;font-weight:400;letter-spacing:-0.92px">REDACTED13</div>
<div class="t" style="left:425.90px;top:460.07px;font-size:14px;line-height:20px;color:#62a3d4;font-weight:400;letter-spacing:-0.92px">REDACTED14</div>
<div class="t" style="left:425.90px;top:481.96px;font-size:14px;line-height:20px;color:#62a3d4;font-weight:400;letter-spacing:-0.92px">REDACTED15</div>
<div class="t" style="left:425.90px;top:503.85px;font-size:14px;line-height:20px;color:#62a3d4;font-weight:400;letter-spacing:-0.92px">REDACTED16</div>
<div class="t" style="left:425.90px;top:525.74px;font-size:14px;line-height:20px;color:#62a3d4;font-weight:400;letter-spacing:-0.92px">REDACTED17</div>
<div class="t" style="left:425.90px;top:547.63px;font-size:14px;line-height:20px;color:#62a3d4;font-weight:400;letter-spacing:-0.92px">REDACTED18</div>
<div class="t" style="left:425.90px;top:569.52px;font-size:14px;line-height:20px;color:#62a3d4;font-weight:400;letter-spacing:-0.92px">REDACTED19</div>
<div class="t" style="left:425.90px;top:591.41px;font-size:14px;line-height:20px;color:#62a3d4;font-weight:400;letter-spacing:-0.92px">REDACTED20</div>
<div class="t" style="left:425.90px;top:613.30px;font-size:14px;line-height:20px;color:#62a3d4;font-weight:400;letter-spacing:-0.92px">REDACTED21</div>
<div class="t" style="left:425.90px;top:635.19px;font-size:14px;line-height:20px;color:#62a3d4;font-weight:400;letter-spacing:-0.92px">REDACTED22</div>
<div class="t" style="left:425.90px;top:657.08px;font-size:14px;line-height:20px;color:#62a3d4;font-weight:400;letter-spacing:-0.92px">REDACTED23</div>
<div class="t" style="left:425.90px;top:678.97px;font-size:14px;line-height:20px;color:#62a3d4;font-weight:400;letter-spacing:-0.92px">REDACTED24</div>
<div class="t" style="left:425.90px;top:700.86px;font-size:14px;line-height:20px;color:#62a3d4;font-weight:400;letter-spacing:-0.92px">REDACTED25</div>
<div class="t" style="left:425.90px;top:722.75px;font-size:14px;line-height:20px;color:#62a3d4;font-weight:400;letter-spacing:-0.92px">REDACTED26</div>
<div class="t" style="left:425.90px;top:744.64px;font-size:14px;line-height:20px;color:#62a3d4;font-weight:400;letter-spacing:-0.92px">REDACTED27</div>
<div class="t" style="left:425.90px;top:766.53px;font-size:14px;line-height:20px;color:#62a3d4;font-weight:400;letter-spacing:-0.92px">REDACTED28</div>
<div class="t" style="left:425.90px;top:788.42px;font-size:14px;line-height:20px;color:#62a3d4;font-weight:400;letter-spacing:-0.92px">REDACTED29</div>
<div class="t" style="left:425.90px;top:810.31px;font-size:14px;line-height:20px;color:#62a3d4;font-weight:400;letter-spacing:-0.92px">REDACTED30</div>
<div class="t" style="left:425.90px;top:832.20px;font-size:14px;line-height:20px;color:#62a3d4;font-weight:400;letter-spacing:-0.92px">REDACTED31</div>
<div class="t" style="left:425.90px;top:854.09px;font-size:14px;line-height:20px;color:#62a3d4;font-weight:400;letter-spacing:-0.92px">REDACTED32</div>
<div class="t" style="left:425.90px;top:875.98px;font-size:14px;line-height:20px;color:#62a3d4;font-weight:400;letter-spacing:-0.92px">REDACTED33</div>
<div class="t" style="left:425.90px;top:897.87px;font-size:14px;line-height:20px;color:#62a3d4;font-weight:400;letter-spacing:-0.92px">REDACTED34</div>
<div class="t" style="left:425.90px;top:919.76px;font-size:14px;line-height:20px;color:#62a3d4;font-weight:400;letter-spacing:-0.92px">REDACTED35</div>
<div class="t" style="left:1378.80px;top:284.95px;font-size:14px;line-height:20px;color:#62a3d4;font-weight:400;letter-spacing:-0.92px">REDACTED0</div>
<div class="t" style="left:1378.80px;top:306.84px;font-size:14px;line-height:20px;color:#62a3d4;font-weight:400;letter-spacing:-0.92px">REDACTED1</div>
<div class="t" style="left:1378.80px;top:328.73px;font-size:14px;line-height:20px;color:#62a3d4;font-weight:400;letter-spacing:-0.92px">REDACTED2</div>
<div class="t" style="left:1378.80px;top:350.62px;font-size:14px;line-height:20px;color:#62a3d4;font-weight:400;letter-spacing:-0.92px">REDACTED3</div>
<div class="t" style="left:1378.80px;top:372.51px;font-size:14px;line-height:20px;color:#62a3d4;font-weight:400;letter-spacing:-0.92px">REDACTED4</div>
<div class="t" style="left:1378.80px;top:394.40px;font-size:14px;line-height:20px;color:#62a3d4;font-weight:400;letter-spacing:-0.92px">REDACTED5</div>
<div class="t" style="left:298.40px;top:285.15px;font-size:14px;line-height:20px;color:#212529;font-weight:400;letter-spacing:0.1px">Antivirus</div>
<div class="t" style="left:298.40px;top:306.95px;font-size:14px;line-height:20px;color:#212529;font-weight:400;letter-spacing:0.1px">running</div>
<div class="t" style="left:1468.70px;top:285.15px;font-size:14px;line-height:20px;color:#212529;font-weight:400;">6</div>
</body></html>
